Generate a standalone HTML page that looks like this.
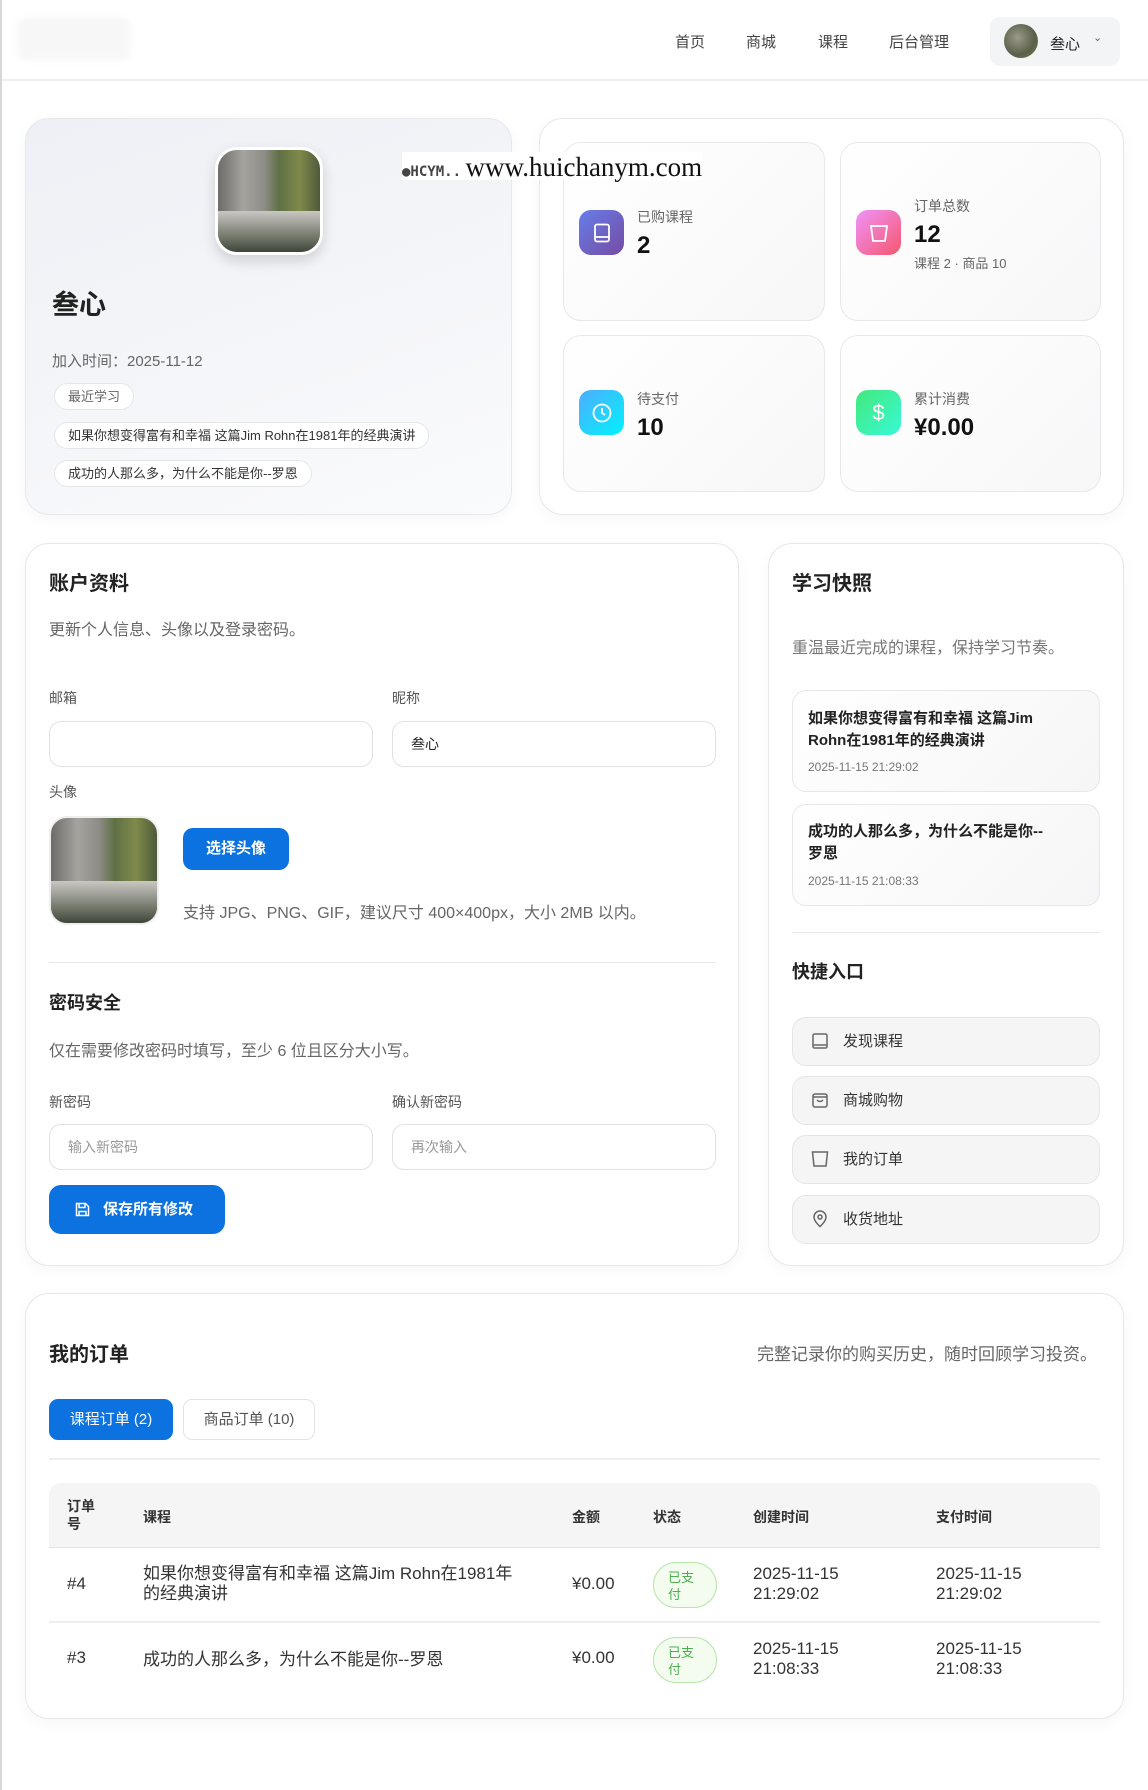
<!DOCTYPE html>
<html><head><meta charset="utf-8"><style>
*{box-sizing:border-box;margin:0;padding:0}
body{width:1148px;height:1790px;background:#fff;font-family:"Liberation Sans","Noto Sans CJK SC",sans-serif;color:#1f2329;position:relative;overflow:hidden}
.a{position:absolute}
.card{position:absolute;border:1px solid #e6e8ec;border-radius:24px;background:#fff;box-shadow:0 4px 14px rgba(0,0,0,.04)}
.tile{position:absolute;border:1px solid #e8e8ec;border-radius:18px;background:linear-gradient(135deg,#fff,#f7f7f8)}
.ic{position:absolute;width:45px;height:45px;border-radius:12px;display:flex;align-items:center;justify-content:center}
.lbl{position:absolute;font-size:14px;color:#666}
.val{position:absolute;font-size:24px;font-weight:700;color:#111}
.chip{position:absolute;height:27px;border:1px solid #e4e6ea;border-radius:14px;background:#fff;font-size:13px;color:#333;padding:0 13px;line-height:25px}
.inp{position:absolute;height:46px;border:1px solid #dfe1e5;border-radius:12px;background:#fff;font-size:14px;color:#999;padding-left:18px;line-height:44px}
.fl{position:absolute;font-size:14px;color:#555}
.qb{position:absolute;left:792px;width:308px;height:49px;border:1px solid #e4e5e8;border-radius:14px;background:#f5f5f6;font-size:15px;color:#333;line-height:47px;padding-left:50px}
.qb svg{position:absolute;left:18px;top:14px}
.th{position:absolute;font-size:14px;font-weight:700;color:#333}
.td{position:absolute;font-size:17px;color:#333;line-height:20px}
.paid{position:absolute;height:46px;border:1px solid #b7e6a9;border-radius:23px;background:#f3fcef;color:#4caf50;font-size:13px;line-height:17px;padding:6px 0 0 14px;width:64px}
</style></head><body>
<div class="a" style="left:0;top:0;width:2px;height:1790px;background:#d8d8d8"></div>
<div class="a" style="left:2px;top:0;width:1146px;height:81px;border-bottom:2px solid #eeeff1;background:#fff"></div>
<div class="a" style="left:18px;top:18px;width:112px;height:42px;background:#f7f7f8;border-radius:6px;filter:blur(3px)"></div>
<div class="a" style="left:675px;top:31px;font-size:15px;color:#444">首页</div>
<div class="a" style="left:746px;top:31px;font-size:15px;color:#444">商城</div>
<div class="a" style="left:818px;top:31px;font-size:15px;color:#444">课程</div>
<div class="a" style="left:889px;top:31px;font-size:15px;color:#444">后台管理</div>
<div class="a" style="left:990px;top:17px;width:130px;height:49px;border-radius:10px;background:#f3f4f6"></div>
<div class="a" style="left:1004px;top:24px;width:34px;height:34px;border-radius:50%;background:radial-gradient(circle at 40% 40%,#9a9a8a,#5a6048 60%,#7b7f60)"></div>
<div class="a" style="left:1050px;top:33px;font-size:15px;color:#222">叁心</div>
<div class="a" style="left:1093px;top:31px;font-size:11px;color:#666">&#8964;</div>

<div class="card" style="left:25px;top:118px;width:487px;height:397px;background:linear-gradient(160deg,#eef0f5,#f5f6f9 60%,#fafbfc)"></div>
<div class="a" style="left:215px;top:147px;width:108px;height:108px;border-radius:22px;border:3px solid #fff;box-shadow:0 6px 14px rgba(0,0,0,.15);background:linear-gradient(90deg,#6d6c68 0%,#a4a39e 25%,#8e8d88 45%,#5f7045 60%,#7f8a4a 80%,#4e5a3a 100%);overflow:hidden">
<div style="position:absolute;left:0;bottom:0;width:100%;height:40%;background:linear-gradient(180deg,#c9c7c2,#6a6f62 70%,#3d453a)"></div></div>
<div class="a" style="left:52px;top:283px;font-size:27px;font-weight:700;color:#222">叁心</div>
<div class="a" style="left:52px;top:350px;font-size:15px;color:#666">加入时间：2025-11-12</div>
<div class="chip" style="left:54px;top:383px;color:#666">最近学习</div>
<div class="chip" style="left:54px;top:422px">如果你想变得富有和幸福 这篇Jim Rohn在1981年的经典演讲</div>
<div class="chip" style="left:54px;top:460px">成功的人那么多，为什么不能是你--罗恩</div>

<div class="card" style="left:539px;top:118px;width:585px;height:397px"></div>
<div class="tile" style="left:563px;top:142px;width:262px;height:179px"></div>
<div class="tile" style="left:840px;top:142px;width:261px;height:179px"></div>
<div class="tile" style="left:563px;top:335px;width:262px;height:157px"></div>
<div class="tile" style="left:840px;top:335px;width:261px;height:157px"></div>
<div class="ic" style="left:579px;top:210px;background:linear-gradient(135deg,#667eea,#764ba2)"><svg width="18" height="20" viewBox="0 0 18 20" fill="none" stroke="#fff" stroke-width="1.8"><rect x="2" y="1.5" width="14" height="17" rx="2"/><path d="M2 14h14"/></svg></div>
<div class="lbl" style="left:637px;top:207px">已购课程</div><div class="val" style="left:637px;top:232px">2</div>
<div class="ic" style="left:856px;top:210px;background:linear-gradient(135deg,#f093fb,#f5576c)"><svg width="20" height="20" viewBox="0 0 20 20" fill="none" stroke="#fff" stroke-width="1.8"><path d="M2 3h16l-2 15H4z"/></svg></div>
<div class="lbl" style="left:914px;top:196px">订单总数</div><div class="val" style="left:914px;top:221px">12</div>
<div class="a" style="left:914px;top:253px;font-size:13px;color:#666">课程 2 · 商品 10</div>
<div class="ic" style="left:579px;top:390px;background:linear-gradient(135deg,#4facfe,#00f2fe)"><svg width="22" height="22" viewBox="0 0 22 22" fill="none" stroke="#fff" stroke-width="1.8"><circle cx="11" cy="11" r="8.5"/><path d="M11 6v5l3 2"/></svg></div>
<div class="lbl" style="left:637px;top:389px">待支付</div><div class="val" style="left:637px;top:414px">10</div>
<div class="ic" style="left:856px;top:390px;background:linear-gradient(135deg,#43e97b,#38f9d7)"><span style="color:#fff;font-size:22px">$</span></div>
<div class="lbl" style="left:914px;top:389px">累计消费</div><div class="val" style="left:914px;top:414px">¥0.00</div>

<div class="a" style="left:402px;top:152px;height:28px;background:#fff;white-space:nowrap;z-index:10"><span style="font-size:14px;font-weight:700;color:#444;font-family:'DejaVu Sans Mono',monospace">&#9679;HCYM..</span> <span style="font-family:'Liberation Serif',serif;font-size:27px;color:#111">www.huichanym.com</span></div>

<div class="card" style="left:25px;top:543px;width:714px;height:723px"></div>
<div class="a" style="left:49px;top:567px;font-size:20px;font-weight:700;color:#222">账户资料</div>
<div class="a" style="left:49px;top:616px;font-size:16px;color:#666">更新个人信息、头像以及登录密码。</div>
<div class="fl" style="left:49px;top:688px">邮箱</div><div class="fl" style="left:392px;top:688px">昵称</div>
<div class="inp" style="left:49px;top:721px;width:324px"></div>
<div class="inp" style="left:392px;top:721px;width:324px;color:#222">叁心</div>
<div class="fl" style="left:49px;top:782px">头像</div>
<div class="a" style="left:49px;top:816px;width:110px;height:109px;border-radius:18px;border:2px solid #eee;background:linear-gradient(90deg,#6d6c68 0%,#a4a39e 25%,#8e8d88 45%,#5f7045 60%,#7f8a4a 80%,#4e5a3a 100%);overflow:hidden">
<div style="position:absolute;left:0;bottom:0;width:100%;height:40%;background:linear-gradient(180deg,#c9c7c2,#6a6f62 70%,#3d453a)"></div></div>
<div class="a" style="left:183px;top:828px;width:106px;height:42px;border-radius:10px;background:#0b72e0;color:#fff;font-size:15px;font-weight:700;text-align:center;line-height:42px">选择头像</div>
<div class="a" style="left:183px;top:899px;font-size:16px;color:#666">支持 JPG、PNG、GIF，建议尺寸 400×400px，大小 2MB 以内。</div>
<div class="a" style="left:49px;top:962px;width:667px;height:1px;background:#e6e7ea"></div>
<div class="a" style="left:49px;top:989px;font-size:18px;font-weight:700;color:#222">密码安全</div>
<div class="a" style="left:49px;top:1037px;font-size:16px;color:#666">仅在需要修改密码时填写，至少 6 位且区分大小写。</div>
<div class="fl" style="left:49px;top:1092px">新密码</div><div class="fl" style="left:392px;top:1092px">确认新密码</div>
<div class="inp" style="left:49px;top:1124px;width:324px">输入新密码</div>
<div class="inp" style="left:392px;top:1124px;width:324px">再次输入</div>
<div class="a" style="left:49px;top:1185px;width:176px;height:49px;border-radius:12px;background:#0b72e0;color:#fff;font-size:15px;font-weight:700;line-height:49px;padding-left:54px">保存所有修改
<svg style="position:absolute;left:26px;top:17px" width="15" height="15" viewBox="0 0 15 15" fill="none" stroke="#fff" stroke-width="1.5"><path d="M1.5 1.5h9l3 3v9h-12z"/><path d="M4 1.5v4h6v-4M4 13.5v-4h7v4"/></svg></div>

<div class="card" style="left:768px;top:543px;width:356px;height:723px"></div>
<div class="a" style="left:792px;top:567px;font-size:20px;font-weight:700;color:#222">学习快照</div>
<div class="a" style="left:792px;top:634px;font-size:16px;color:#777">重温最近完成的课程，保持学习节奏。</div>
<div class="a" style="left:792px;top:690px;width:308px;height:102px;border:1px solid #e6e7ea;border-radius:14px;background:linear-gradient(135deg,#fff,#f6f6f7)"></div>
<div class="a" style="left:808px;top:708px;width:262px;font-size:15px;font-weight:700;color:#222;line-height:22px">如果你想变得富有和幸福 这篇Jim Rohn在1981年的经典演讲</div>
<div class="a" style="left:808px;top:760px;font-size:12px;color:#777">2025-11-15 21:29:02</div>
<div class="a" style="left:792px;top:804px;width:308px;height:102px;border:1px solid #e6e7ea;border-radius:14px;background:linear-gradient(135deg,#fff,#f6f6f7)"></div>
<div class="a" style="left:808px;top:821px;width:268px;font-size:15px;font-weight:700;color:#222;line-height:22px">成功的人那么多，为什么不能是你--<br>罗恩</div>
<div class="a" style="left:808px;top:874px;font-size:12px;color:#777">2025-11-15 21:08:33</div>
<div class="a" style="left:792px;top:932px;width:308px;height:1px;background:#e6e7ea"></div>
<div class="a" style="left:792px;top:958px;font-size:18px;font-weight:700;color:#222">快捷入口</div>
<div class="qb" style="top:1017px"><svg width="18" height="18" viewBox="0 0 18 18" fill="none" stroke="#666" stroke-width="1.5"><rect x="2" y="2" width="14" height="14" rx="1.5"/><path d="M2 13h14"/></svg>发现课程</div>
<div class="qb" style="top:1076px"><svg width="18" height="18" viewBox="0 0 18 18" fill="none" stroke="#666" stroke-width="1.5"><rect x="2" y="3" width="14" height="13" rx="2"/><path d="M2 6h14M6 9q3 3 6 0"/></svg>商城购物</div>
<div class="qb" style="top:1135px"><svg width="18" height="18" viewBox="0 0 18 18" fill="none" stroke="#666" stroke-width="1.5"><path d="M1.5 2h15l-1.5 14H3z"/></svg>我的订单</div>
<div class="qb" style="top:1195px"><svg width="18" height="18" viewBox="0 0 18 18" fill="none" stroke="#666" stroke-width="1.5"><path d="M9 16.5s-6-5-6-9.5a6 6 0 0112 0c0 4.5-6 9.5-6 9.5z"/><circle cx="9" cy="7" r="2"/></svg>收货地址</div>

<div class="card" style="left:25px;top:1293px;width:1099px;height:426px"></div>
<div class="a" style="left:49px;top:1338px;font-size:20px;font-weight:700;color:#222">我的订单</div>
<div class="a" style="right:51px;top:1340px;font-size:17px;color:#666">完整记录你的购买历史，随时回顾学习投资。</div>
<div class="a" style="left:49px;top:1399px;width:124px;height:41px;border-radius:9px;background:#0b72e0;color:#fff;font-size:15px;text-align:center;line-height:41px">课程订单 (2)</div>
<div class="a" style="left:183px;top:1399px;width:132px;height:41px;border-radius:9px;border:1px solid #e2e3e6;color:#555;font-size:15px;text-align:center;line-height:39px">商品订单 (10)</div>
<div class="a" style="left:49px;top:1458px;width:1051px;height:2px;background:#eceef0"></div>
<div class="a" style="left:49px;top:1483px;width:1051px;height:65px;background:#f5f5f6;border-radius:12px 12px 0 0;border-bottom:1px solid #e2e3e6"></div>
<div class="th" style="left:67px;top:1497px;line-height:18px">订单<br>号</div>
<div class="th" style="left:143px;top:1507px">课程</div>
<div class="th" style="left:572px;top:1507px">金额</div>
<div class="th" style="left:653px;top:1507px">状态</div>
<div class="th" style="left:753px;top:1507px">创建时间</div>
<div class="th" style="left:936px;top:1507px">支付时间</div>
<div class="a" style="left:49px;top:1621px;width:1051px;height:2px;background:#eceef0"></div>
<div class="td" style="left:67px;top:1574px">#4</div>
<div class="td" style="left:143px;top:1564px;width:410px">如果你想变得富有和幸福 这篇Jim Rohn在1981年<br>的经典演讲</div>
<div class="td" style="left:572px;top:1574px">¥0.00</div>
<div class="paid" style="left:653px;top:1562px">已支<br>付</div>
<div class="td" style="left:753px;top:1564px">2025-11-15<br>21:29:02</div>
<div class="td" style="left:936px;top:1564px">2025-11-15<br>21:29:02</div>
<div class="td" style="left:67px;top:1648px">#3</div>
<div class="td" style="left:143px;top:1650px">成功的人那么多，为什么不能是你--罗恩</div>
<div class="td" style="left:572px;top:1648px">¥0.00</div>
<div class="paid" style="left:653px;top:1637px">已支<br>付</div>
<div class="td" style="left:753px;top:1639px">2025-11-15<br>21:08:33</div>
<div class="td" style="left:936px;top:1639px">2025-11-15<br>21:08:33</div>
</body></html>
